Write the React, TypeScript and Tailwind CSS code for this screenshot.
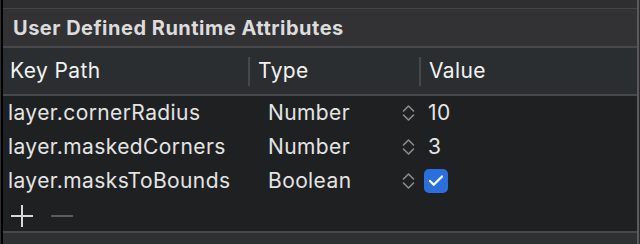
import { Check } from 'lucide-react'

type Attr = {
  keyPath: string
  type: string
  value: string | boolean
}

const attributes: Attr[] = [
  { keyPath: 'layer.cornerRadius', type: 'Number', value: '10' },
  { keyPath: 'layer.maskedCorners', type: 'Number', value: '3' },
  { keyPath: 'layer.masksToBounds', type: 'Boolean', value: true },
]

function Stepper() {
  return (
    <svg width="13" height="18" viewBox="0 0 13 18" fill="none" className="text-[#8c8c8e]">
      <path d="M1.5 7 L6.5 2 L11.5 7" stroke="currentColor" strokeWidth="1.6" strokeLinecap="round" strokeLinejoin="round" />
      <path d="M1.5 11 L6.5 16 L11.5 11" stroke="currentColor" strokeWidth="1.6" strokeLinecap="round" strokeLinejoin="round" />
    </svg>
  )
}

export default function App() {
  return (
    <div className="flex h-[244px] w-[640px] overflow-hidden bg-[#1f2021] font-['Inter','Liberation_Sans',sans-serif]">
      <div className="w-[1px] bg-[#2e2e30]" />
      <div className="w-[2px] bg-black" />

      <div className="flex flex-1 flex-col">
        <div className="h-[8px] border-b border-[#454547] bg-[#2e2e30] box-content" />

        <div className="flex h-[37px] items-center border-b-2 border-[#48484a] bg-[#323234] pl-[10px] box-content">
          <span className="text-[20px] font-bold tracking-[0.5px] text-[#dcdcdc]">User Defined Runtime Attributes</span>
        </div>

        <div className="flex h-[46px] items-center border-b-2 border-[#48484a] bg-[#2b2e31] box-content text-[21px] tracking-[0.4px] text-[#f2f2f2]">
          <div className="w-[245px] pl-[7px]">Key Path</div>
          <div className="h-[29px] w-[2px] bg-[#45484b]" />
          <div className="w-[169px] pl-[8px]">Type</div>
          <div className="h-[29px] w-[2px] bg-[#45484b]" />
          <div className="pl-[8px]">Value</div>
        </div>

        <div className="flex flex-1 flex-col text-[21px] tracking-[0.4px] text-[#e4e4e4]">
          {attributes.map((a) => (
            <div key={a.keyPath} className="flex h-[34px] items-center">
              <div className="w-[265px] pl-[5px]">{a.keyPath}</div>
              <div className="w-[134px]">{a.type}</div>
              <Stepper />
              <div className="pl-[13px]">
                {typeof a.value === 'boolean' ? (
                  <div className="-ml-[4px] flex h-[24px] w-[24px] items-center justify-center rounded-[5px] bg-[#2b6fdc]">
                    <Check size={18} strokeWidth={3} className="text-white" />
                  </div>
                ) : (
                  a.value
                )}
              </div>
            </div>
          ))}
          <div className="flex items-center gap-[18px] pl-[8px] pt-[7px]">
            <div className="relative h-[22px] w-[22px]">
              <div className="absolute left-0 top-[10px] h-[2px] w-[22px] bg-[#d8d8d8]" />
              <div className="absolute left-[10px] top-0 h-[22px] w-[2px] bg-[#d8d8d8]" />
            </div>
            <div className="h-[2px] w-[22px] bg-[#5c5c5e]" />
          </div>
        </div>

        <div className="h-[11px] border-t-2 border-[#48484a] bg-[#2f3031] box-content" />
      </div>

      <div className="w-[2px] bg-[#5a5a5c]" />
      <div className="w-[1px] bg-[#2a2a2c]" />
    </div>
  )
}
